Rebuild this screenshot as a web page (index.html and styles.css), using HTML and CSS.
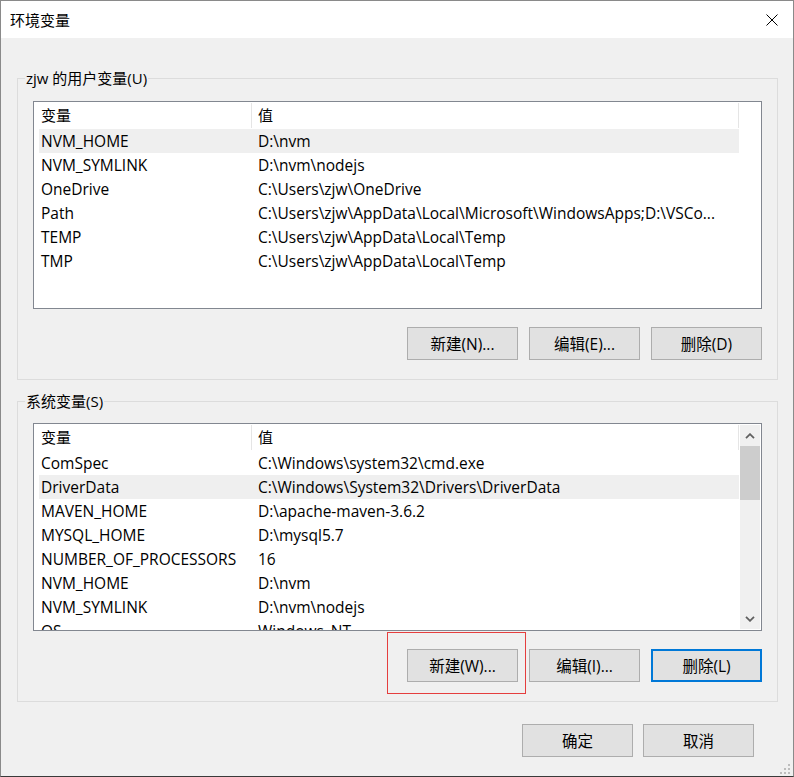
FILE: index.html
```html
<!DOCTYPE html>
<html lang="zh-CN">
<head>
<meta charset="utf-8">
<title>环境变量</title>
<link rel="stylesheet" href="styles.css">
</head>
<body>
<div class="window">
  <div class="titlebar">
    <span class="title">环境变量</span>
    <span class="close">
      <svg width="12" height="12" viewBox="0 0 12 12"><path d="M0.5 0.5 L11.5 11.5 M11.5 0.5 L0.5 11.5" stroke="#000" stroke-width="1" fill="none"/></svg>
    </span>
  </div>
  <div class="content">
    <fieldset class="group group-user">
      <legend>zjw 的用户变量(U)</legend>
      <div class="list">
        <div class="list-main">
          <div class="row header"><div class="c1">变量</div><div class="c2">值</div></div>
          <div class="row sel"><div class="c1">NVM_HOME</div><div class="c2">D:\nvm</div></div>
          <div class="row"><div class="c1">NVM_SYMLINK</div><div class="c2">D:\nvm\nodejs</div></div>
          <div class="row"><div class="c1">OneDrive</div><div class="c2">C:\Users\zjw\OneDrive</div></div>
          <div class="row"><div class="c1">Path</div><div class="c2">C:\Users\zjw\AppData\Local\Microsoft\WindowsApps;D:\VSCo...</div></div>
          <div class="row"><div class="c1">TEMP</div><div class="c2">C:\Users\zjw\AppData\Local\Temp</div></div>
          <div class="row"><div class="c1">TMP</div><div class="c2">C:\Users\zjw\AppData\Local\Temp</div></div>
        </div>
      </div>
      <div class="buttons">
        <button class="btn">新建(N)...</button>
        <button class="btn">编辑(E)...</button>
        <button class="btn">删除(D)</button>
      </div>
    </fieldset>
    <fieldset class="group group-sys">
      <legend>系统变量(S)</legend>
      <div class="list">
        <div class="list-main">
          <div class="row header"><div class="c1">变量</div><div class="c2">值</div></div>
          <div class="row"><div class="c1">ComSpec</div><div class="c2">C:\Windows\system32\cmd.exe</div></div>
          <div class="row sel"><div class="c1">DriverData</div><div class="c2">C:\Windows\System32\Drivers\DriverData</div></div>
          <div class="row"><div class="c1">MAVEN_HOME</div><div class="c2">D:\apache-maven-3.6.2</div></div>
          <div class="row"><div class="c1">MYSQL_HOME</div><div class="c2">D:\mysql5.7</div></div>
          <div class="row"><div class="c1">NUMBER_OF_PROCESSORS</div><div class="c2">16</div></div>
          <div class="row"><div class="c1">NVM_HOME</div><div class="c2">D:\nvm</div></div>
          <div class="row"><div class="c1">NVM_SYMLINK</div><div class="c2">D:\nvm\nodejs</div></div>
          <div class="row"><div class="c1">OS</div><div class="c2">Windows_NT</div></div>
        </div>
        <div class="scrollbar">
          <div class="sb-arrow">
            <svg width="10" height="6" viewBox="0 0 10 6"><path d="M1 5.2 L5 1.2 L9 5.2" stroke="#606060" stroke-width="1.8" fill="none"/></svg>
          </div>
          <div class="sb-thumb"></div>
          <div class="sb-track"></div>
          <div class="sb-arrow">
            <svg width="10" height="6" viewBox="0 0 10 6"><path d="M1 0.8 L5 4.8 L9 0.8" stroke="#606060" stroke-width="1.8" fill="none"/></svg>
          </div>
        </div>
      </div>
      <div class="buttons">
        <button class="btn">新建(W)...</button>
        <button class="btn">编辑(I)...</button>
        <button class="btn focused">删除(L)</button>
      </div>
    </fieldset>
    <div class="footer">
      <button class="btn">确定</button>
      <button class="btn">取消</button>
    </div>
  </div>
  <div class="annot"></div>
  <div class="grip">
    <svg width="12" height="12" viewBox="0 0 12 12" fill="#bdbdbd">
      <rect x="9" y="1" width="2" height="2"/>
      <rect x="5" y="5" width="2" height="2"/><rect x="9" y="5" width="2" height="2"/>
      <rect x="1" y="9" width="2" height="2"/><rect x="5" y="9" width="2" height="2"/><rect x="9" y="9" width="2" height="2"/>
    </svg>
  </div>
</div>
</body>
</html>
```

FILE: styles.css
```css
* { box-sizing: border-box; }

html, body {
  margin: 0;
  padding: 0;
}

body {
  width: 794px;
  height: 777px;
  overflow: hidden;
  font-family: "Open Sans", "Noto Sans CJK SC", sans-serif;
  font-size: 15.5px;
  color: #000;
  background: #fff;
}

.window {
  position: relative;
  width: 794px;
  height: 777px;
  background: #f0f0f0;
  border: 1px solid #8a8a8a;
  border-bottom-color: #3a3a3a;
  display: flex;
  flex-direction: column;
}

.titlebar {
  height: 37px;
  background: #fff;
  display: flex;
  align-items: center;
  justify-content: space-between;
  padding: 0 15px 0 9px;
  flex: none;
}

.title {
  font-family: "Noto Sans CJK SC", sans-serif;
  font-size: 15px;
  line-height: 20px;
}

.close {
  display: flex;
  width: 12px;
  height: 12px;
}

.content {
  padding: 0 15px 0 16px;
  display: flex;
  flex-direction: column;
}

.group {
  margin: 0;
  width: 761px;
  min-inline-size: 0;
  border: 1px solid #dcdcdc;
  padding: 12px 15px 19px 15px;
}

.group-user { margin-top: 30px; }
.group-sys { margin-top: 11px; padding-top: 11px; }

.group legend {
  margin-left: -8px;
  padding: 0 1px;
  font-size: 15px;
  line-height: 21px;
  font-family: "Open Sans", "Noto Sans CJK SC", sans-serif;
}

.list {
  height: 208px;
  background: #fff;
  border: 1px solid #828790;
  display: flex;
  overflow: hidden;
}

.list-main {
  flex: 1;
  overflow: hidden;
  padding-left: 5px;
}

.row {
  display: grid;
  grid-template-columns: 213px 487px;
  width: 700px;
  height: 24px;
  line-height: 24px;
  white-space: nowrap;
}

.row .c1 { padding-left: 2px; overflow: hidden; }
.row .c2 { padding-left: 6px; overflow: hidden; }

.row.sel { background: #efefef; }

.row.header {
  height: 27px;
  line-height: 25px;
  align-items: start;
}

.row.header .c1,
.row.header .c2 {
  margin-top: 1px;
  height: 25px;
  border-right: 1px solid #e5e5e5;
  font-size: 15px;
}

.scrollbar {
  width: 20px;
  margin: 1px 1px 1px 0;
  background: #f0f0f0;
  display: flex;
  flex-direction: column;
}

.sb-arrow {
  height: 21px;
  display: flex;
  align-items: center;
  justify-content: center;
  flex: none;
}

.sb-thumb {
  height: 54px;
  background: #cdcdcd;
  flex: none;
}

.sb-track { flex: 1; }

.buttons {
  margin-top: 18px;
  display: flex;
  justify-content: flex-end;
  gap: 11px;
}

.btn {
  width: 111px;
  height: 33px;
  padding: 0;
  margin: 0;
  font: inherit;
  font-size: 15.5px;
  color: #000;
  background: #e1e1e1;
  border: 1px solid #adadad;
  border-radius: 0;
  display: flex;
  align-items: center;
  justify-content: center;
}

.btn.focused {
  border: 2px solid #0078d7;
}

.footer {
  margin-top: 22px;
  display: flex;
  justify-content: flex-end;
  gap: 10px;
  padding-right: 24px;
}

.annot {
  position: absolute;
  left: 386px;
  top: 631px;
  width: 139px;
  height: 62px;
  border: 1px solid #e53e3e;
}

.grip {
  position: absolute;
  right: 2px;
  bottom: 1px;
  width: 12px;
  height: 12px;
  display: flex;
}
```
